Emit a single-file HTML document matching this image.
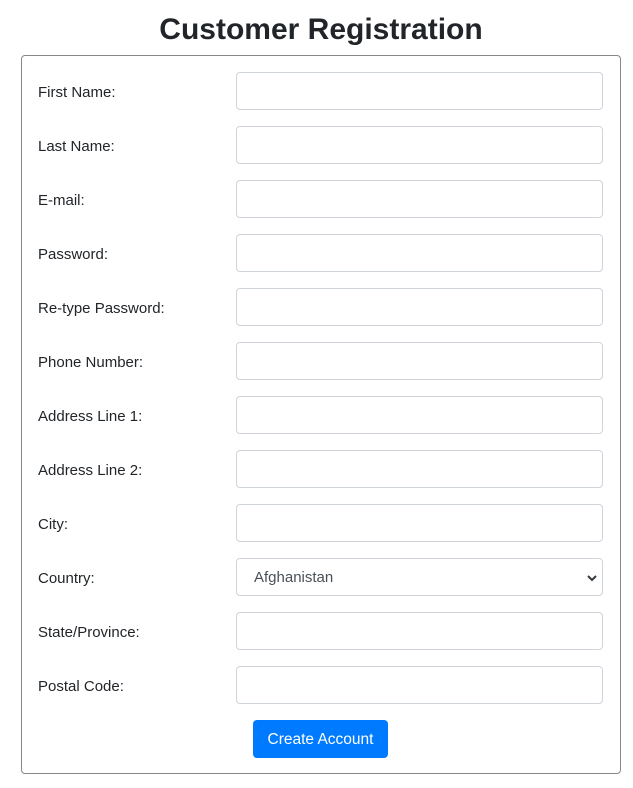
<!DOCTYPE html>
<html><head><style>
body{margin:0;background:#fff;font-family:"Liberation Sans",sans-serif;color:#212529;width:633px;height:788px;position:relative;overflow:hidden}
h1{position:absolute;top:10px;left:0;width:642px;text-align:center;margin:0;font-size:30px;font-weight:bold;line-height:40px}
.box{position:absolute;left:21px;top:55px;width:598px;height:717px;border:1px solid #888;border-radius:4px}
.l{position:absolute;left:38px;font-size:15px;line-height:20px}
.i{position:absolute;left:236px;width:365px;height:36px;border:1px solid #ced4da;border-radius:4px;background:#fff}
.sel{font-size:15px;color:#495057;line-height:38px;padding-left:17px;box-sizing:border-box;width:367px;height:38px}
.btn{position:absolute;left:253px;top:720px;width:135px;height:38px;background:#007bff;color:#fff;border-radius:4px;font-size:15.5px;line-height:39px;text-align:center}
</style></head><body>
<h1>Customer Registration</h1>
<div class="box"></div>
<div class="l" style="top:83px">First Name:</div><div class="i" style="top:72px"></div>
<div class="l" style="top:137px">Last Name:</div><div class="i" style="top:126px"></div>
<div class="l" style="top:191px">E-mail:</div><div class="i" style="top:180px"></div>
<div class="l" style="top:245px">Password:</div><div class="i" style="top:234px"></div>
<div class="l" style="top:299px">Re-type Password:</div><div class="i" style="top:288px"></div>
<div class="l" style="top:353px">Phone Number:</div><div class="i" style="top:342px"></div>
<div class="l" style="top:407px">Address Line 1:</div><div class="i" style="top:396px"></div>
<div class="l" style="top:461px">Address Line 2:</div><div class="i" style="top:450px"></div>
<div class="l" style="top:515px">City:</div><div class="i" style="top:504px"></div>
<div class="l" style="top:569px">Country:</div><div class="i sel" style="top:558px">Afghanistan<svg style="position:absolute;right:5px;top:15px" width="10" height="8" viewBox="0 0 10 8"><path d="M1 2l4 4 4-4" stroke="#343a40" stroke-width="2" fill="none"/></svg></div>
<div class="l" style="top:623px">State/Province:</div><div class="i" style="top:612px"></div>
<div class="l" style="top:677px">Postal Code:</div><div class="i" style="top:666px"></div>
<div class="btn">Create Account</div>
</body></html>
